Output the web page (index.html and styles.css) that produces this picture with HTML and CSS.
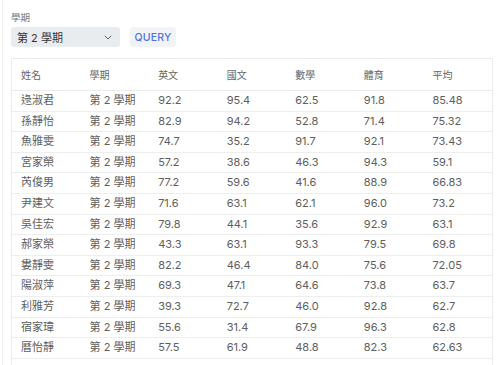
FILE: index.html
```html
<!DOCTYPE html>
<html lang="zh-Hant">
<head>
    <meta charset="UTF-8">
    <meta name="viewport" content="width=device-width, initial-scale=1.0">
    <title>成績查詢</title>
    <link rel="stylesheet" href="styles.css">
</head>
<body>
    <div class="page">
        <div class="filter">
            <label class="filter-label" for="term">學期</label>
            <div class="filter-row">
                <div class="select">
                    <span id="term">第 2 學期</span>
                    <svg class="chevron" width="8" height="5" viewBox="0 0 8 5">
                        <path d="M1 1l3 3 3-3" fill="none" stroke="#666" stroke-width="1" stroke-linecap="round" stroke-linejoin="round"/>
                    </svg>
                </div>
                <button class="query-btn">QUERY</button>
            </div>
        </div>

        <div class="table-wrap">
            <table class="grades">
                <thead>
                    <tr>
                        <th>姓名</th>
                        <th>學期</th>
                        <th>英文</th>
                        <th>國文</th>
                        <th>數學</th>
                        <th>體育</th>
                        <th>平均</th>
                    </tr>
                </thead>
                <tbody id="rows"></tbody>
            </table>
        </div>
    </div>

    <script>
        const students = [
            ['逯淑君', 92.2, 95.4, 62.5, 91.8, '85.48'],
            ['孫靜怡', 82.9, 94.2, 52.8, 71.4, '75.32'],
            ['魚雅雯', 74.7, 35.2, 91.7, 92.1, '73.43'],
            ['宮家榮', 57.2, 38.6, 46.3, 94.3, '59.1'],
            ['芮俊男', 77.2, 59.6, 41.6, 88.9, '66.83'],
            ['尹建文', 71.6, 63.1, 62.1, 96.0, '73.2'],
            ['吳佳宏', 79.8, 44.1, 35.6, 92.9, '63.1'],
            ['郝家榮', 43.3, 63.1, 93.3, 79.5, '69.8'],
            ['婁靜雯', 82.2, 46.4, 84.0, 75.6, '72.05'],
            ['陽淑萍', 69.3, 47.1, 64.6, 73.8, '63.7'],
            ['利雅芳', 39.3, 72.7, 46.0, 92.8, '62.7'],
            ['宿家瑋', 55.6, 31.4, 67.9, 96.3, '62.8'],
            ['曆怡靜', 57.5, 61.9, 48.8, 82.3, '62.63']
        ];

        const tbody = document.getElementById('rows');
        students.forEach((s) => {
            const tr = document.createElement('tr');
            const cells = [s[0], '第 2 學期', s[1].toFixed(1), s[2].toFixed(1), s[3].toFixed(1), s[4].toFixed(1), s[5]];
            cells.forEach((c) => {
                const td = document.createElement('td');
                td.textContent = c;
                tr.appendChild(td);
            });
            tbody.appendChild(tr);
        });
    </script>
</body>
</html>
```

FILE: styles.css
```css
body {
    margin: 0;
    font-family: Inter, "Noto Sans CJK TC", sans-serif;
    color: #555;
    background: #fff;
    overflow: hidden;
}
.page {
    margin-left: 2px;
    border-left: 1px solid #f0f0f0;
    padding: 12px 7px 0 8px;
    min-height: 365px;
    box-sizing: border-box;
}
.filter-label {
    display: block;
    font-size: 9.5px;
    line-height: 12px;
    color: #777;
    margin-bottom: 3px;
}
.filter-row {
    display: flex;
    align-items: center;
    gap: 10px;
}
.select {
    display: flex;
    align-items: center;
    justify-content: space-between;
    width: 109px;
    height: 20px;
    box-sizing: border-box;
    padding: 0 8px 0 6px;
    background-color: #e9ecef;
    border-radius: 3px;
    font-size: 11px;
    color: #333;
}
.chevron {
    display: block;
}
.query-btn {
    width: 46px;
    height: 20px;
    padding: 0;
    border: none;
    border-radius: 3px;
    background-color: #f1f3f6;
    color: #4a74e4;
    font-family: Inter, sans-serif;
    font-size: 10.5px;
    font-weight: 500;
    letter-spacing: 0.2px;
    cursor: pointer;
}
.table-wrap {
    margin-top: 11px;
    padding-bottom: 20px;
    border: 1px solid #ebebeb;
    border-bottom: none;
    border-radius: 2px 2px 0 0;
}
.grades {
    width: 100%;
    table-layout: fixed;
    border-collapse: collapse;
}
.grades th {
    font-weight: normal;
    font-size: 10px;
    line-height: 12px;
    color: #666;
    text-align: left;
    padding: 9.5px 9px;
    border-bottom: 1px solid #ebebeb;
}
.grades td {
    font-size: 11px;
    line-height: 11.6px;
    color: #5e5e5e;
    padding: 4px 9px;
    border-bottom: 1px solid #eeeeee;
    white-space: nowrap;
}
```
